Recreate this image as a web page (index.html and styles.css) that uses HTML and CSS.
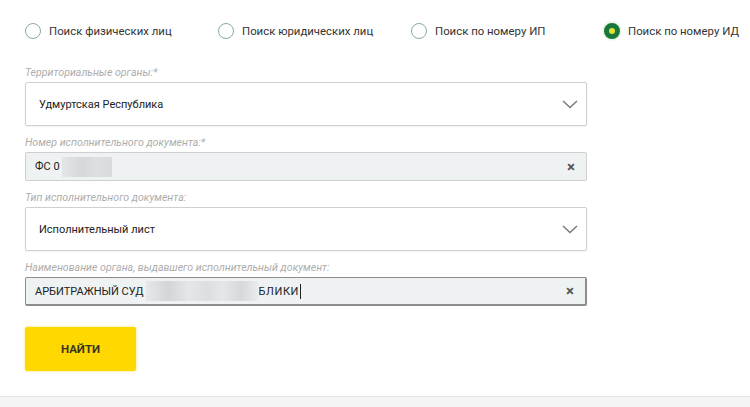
FILE: index.html
```html
<!DOCTYPE html>
<html lang="ru">
<head>
    <meta charset="UTF-8">
    <meta name="viewport" content="width=device-width, initial-scale=1.0">
    <title>Поиск по номеру ИД</title>
    <link rel="stylesheet" href="styles.css">
</head>
<body>
    <div class="page">
        <!-- Search type switch -->
        <div class="modes">
            <label class="mode"><span class="radio"></span>Поиск физических лиц</label>
            <label class="mode"><span class="radio"></span>Поиск юридических лиц</label>
            <label class="mode"><span class="radio"></span>Поиск по номеру ИП</label>
            <label class="mode"><span class="radio checked"></span>Поиск по номеру ИД</label>
        </div>

        <form class="form">
            <div class="field">
                <div class="field-label">Территориальные органы:*</div>
                <div class="select">
                    <span>Удмуртская Республика</span>
                    <svg class="chevron" width="16" height="9" viewBox="0 0 16 9"><path d="M1 1l7 6.5L15 1" fill="none" stroke="#7a7a7a" stroke-width="1.5"/></svg>
                </div>
            </div>

            <div class="field">
                <div class="field-label">Номер исполнительного документа:*</div>
                <div class="input">
                    <span>ФС 0</span><span class="masked masked-short"></span>
                    <span class="clear">×</span>
                </div>
            </div>

            <div class="field">
                <div class="field-label">Тип исполнительного документа:</div>
                <div class="select">
                    <span>Исполнительный лист</span>
                    <svg class="chevron" width="16" height="9" viewBox="0 0 16 9"><path d="M1 1l7 6.5L15 1" fill="none" stroke="#7a7a7a" stroke-width="1.5"/></svg>
                </div>
            </div>

            <div class="field">
                <div class="field-label">Наименование органа, выдавшего исполнительный документ:</div>
                <div class="input focused">
                    <span>АРБИТРАЖНЫЙ СУД</span><span class="masked masked-long"></span><span class="caps">БЛИКИ</span><span class="caret"></span>
                    <span class="clear">×</span>
                </div>
            </div>

            <button type="button" class="submit">НАЙТИ</button>
        </form>
    </div>
    <div class="footer"></div>
</body>
</html>
```

FILE: styles.css
```css
body {
    margin: 0;
    padding: 0;
    background-color: #f4f4f4;
    font-family: Roboto, "Noto Sans", Arial, sans-serif;
    color: #222;
}

.page {
    background-color: #fff;
    padding: 23px 0 25px 25px;
    height: 348px;
    border-bottom: 1px solid #e6e6e6;
}

/* radio switch */
.modes {
    display: grid;
    grid-template-columns: 193px 193px 193px auto;
    height: 16px;
}

.mode {
    display: flex;
    align-items: center;
    gap: 8px;
    font-size: 11.4px;
    color: #333;
}

.radio {
    width: 16px;
    height: 16px;
    box-sizing: border-box;
    border: 1.5px solid #86ab9d;
    border-radius: 50%;
    background-color: #fff;
}

.radio.checked {
    border: 5px solid #17783a;
    background-color: #e4e23a;
    box-shadow: 0 0 3px rgba(120, 180, 80, 0.5);
}

/* fields */
.form {
    width: 562px;
    margin-top: 28px;
}

.field {
    margin-bottom: 11px;
}

.field-label {
    font-size: 10.6px;
    line-height: 12px;
    font-style: italic;
    color: #adadad;
    margin-bottom: 3px;
}

.select,
.input {
    display: flex;
    align-items: center;
    box-sizing: border-box;
    font-size: 11px;
    color: #222;
    border: 1px solid #cfcfcf;
    border-radius: 2px;
}

.select {
    height: 44px;
    padding: 0 8px 0 13px;
    background-color: #fff;
    box-shadow: 0 1px 2px rgba(0, 0, 0, 0.05);
}

.input {
    height: 29px;
    padding: 0 8px 0 9px;
    background-color: #eef2f3;
}

.input.focused {
    border-color: #8d8d8d;
    border-bottom-width: 2px;
    border-right-width: 2px;
}

.caps {
    letter-spacing: 0.6px;
}

.chevron {
    margin-left: auto;
}

.clear {
    margin-left: auto;
    margin-right: 3px;
    font-size: 15px;
    font-weight: bold;
    color: #555;
}

.masked {
    display: inline-block;
    height: 20px;
    margin-left: 2px;
    background: linear-gradient(90deg, #e3e6e7, #d5d8d9 40%, #dde0e1 70%, #d8dbdc);
}

.masked-short {
    width: 50px;
}

.masked-long {
    width: 112px;
    margin-right: 1px;
    background: linear-gradient(90deg, #e6e9ea, #d3d6d7 20%, #e4e7e8 38%, #dcdfe0 55%, #e5e8e9 68%, #d6d9da 85%, #e9eced);
}

.caret {
    display: inline-block;
    width: 1px;
    height: 15px;
    margin-left: 1px;
    background-color: #222;
}

.submit {
    margin-top: 10px;
    width: 111px;
    height: 44px;
    border: none;
    border-radius: 2px;
    background-color: #ffd800;
    box-shadow: 0 0 3px rgba(240, 210, 0, 0.6);
    font-family: Roboto, "Noto Sans", Arial, sans-serif;
    font-size: 11.5px;
    font-weight: bold;
    color: #3a3320;
    cursor: pointer;
}

.footer {
    height: 12px;
}
```
